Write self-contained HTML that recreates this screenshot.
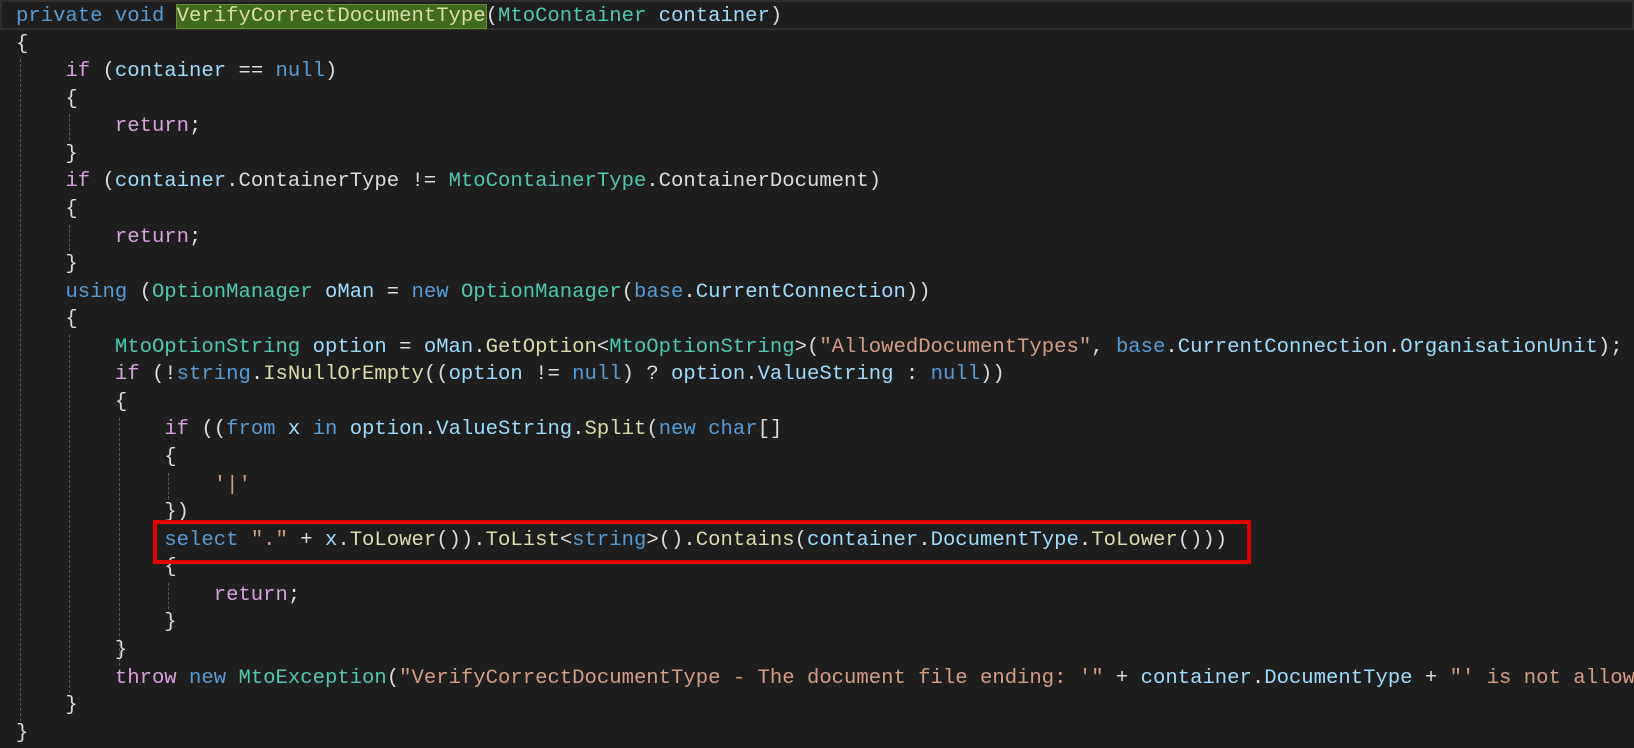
<!DOCTYPE html>
<html><head><meta charset="utf-8"><style>
html,body{margin:0;padding:0;background:#1e1e1e;width:1634px;height:748px;overflow:hidden}
#wrap{position:absolute;left:0;top:0;width:1634px;height:748px;overflow:hidden}
#c{position:absolute;left:16px;top:3px;width:1618px;overflow:hidden;font-family:"Liberation Mono",monospace;font-size:20.6px;line-height:27.57px;color:#dcdcdc;white-space:pre}
.k{color:#569cd6}.p{color:#d8a0df}.v{color:#9cdcfe}.t{color:#4ec9b0}.m{color:#dcdcaa}.s{color:#d69d85}
.hl{background:#3e6b1c;outline:1px solid #6a8f3a;color:#dcdcaa}
.g{position:absolute;width:0;border-left:1px dashed #5a5a5a}
#cur{position:absolute;left:0;top:0;width:1634px;height:30px;border:2px solid #2e2e2e;box-sizing:border-box}
#red{position:absolute;left:153px;top:520px;width:1098px;height:44px;border:4px solid #e00000;box-sizing:border-box}
</style></head><body>
<div id="wrap">
<div id="cur"></div>
<div class="g" style="left:20px;top:59px;height:662px"></div>
<div class="g" style="left:69px;top:114px;height:26px"></div>
<div class="g" style="left:69px;top:225px;height:26px"></div>
<div class="g" style="left:69px;top:335px;height:358px"></div>
<div class="g" style="left:119px;top:418px;height:248px"></div>
<div class="g" style="left:168px;top:473px;height:26px"></div>
<div class="g" style="left:168px;top:583px;height:26px"></div>
<div id="c"><span class="k">private</span> <span class="k">void</span> <span class="hl">VerifyCorrectDocumentType</span>(<span class="t">MtoContainer</span> <span class="v">container</span>)
{
    <span class="p">if</span> (<span class="v">container</span> == <span class="k">null</span>)
    {
        <span class="p">return</span>;
    }
    <span class="p">if</span> (<span class="v">container</span>.ContainerType != <span class="t">MtoContainerType</span>.ContainerDocument)
    {
        <span class="p">return</span>;
    }
    <span class="k">using</span> (<span class="t">OptionManager</span> <span class="v">oMan</span> = <span class="k">new</span> <span class="t">OptionManager</span>(<span class="k">base</span>.<span class="v">CurrentConnection</span>))
    {
        <span class="t">MtoOptionString</span> <span class="v">option</span> = <span class="v">oMan</span>.<span class="m">GetOption</span>&lt;<span class="t">MtoOptionString</span>&gt;(<span class="s">"AllowedDocumentTypes"</span>, <span class="k">base</span>.<span class="v">CurrentConnection</span>.<span class="v">OrganisationUnit</span>);
        <span class="p">if</span> (!<span class="k">string</span>.<span class="m">IsNullOrEmpty</span>((<span class="v">option</span> != <span class="k">null</span>) ? <span class="v">option</span>.<span class="v">ValueString</span> : <span class="k">null</span>))
        {
            <span class="p">if</span> ((<span class="k">from</span> <span class="v">x</span> <span class="k">in</span> <span class="v">option</span>.<span class="v">ValueString</span>.<span class="m">Split</span>(<span class="k">new</span> <span class="k">char</span>[]
            {
                <span class="s">'|'</span>
            })
            <span class="k">select</span> <span class="s">"."</span> + <span class="v">x</span>.<span class="m">ToLower</span>()).<span class="m">ToList</span>&lt;<span class="k">string</span>&gt;().<span class="m">Contains</span>(<span class="v">container</span>.<span class="v">DocumentType</span>.<span class="m">ToLower</span>()))
            {
                <span class="p">return</span>;
            }
        }
        <span class="p">throw</span> <span class="k">new</span> <span class="t">MtoException</span>(<span class="s">"VerifyCorrectDocumentType - The document file ending: '"</span> + <span class="v">container</span>.<span class="v">DocumentType</span> + <span class="s">"' is not allow</span>
    }
}</div>
<div id="red"></div>
</div>
</body></html>
